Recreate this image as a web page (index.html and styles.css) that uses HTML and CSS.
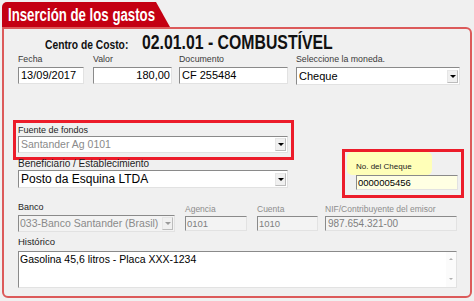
FILE: index.html
```html
<!DOCTYPE html>
<html lang="es">
<head>
<meta charset="utf-8">
<title>Inserción de los gastos</title>
<link rel="stylesheet" href="styles.css">
</head>
<body>
<div class="tab"><span class="narrow tab-text">Inserción de los gastos</span></div>
<div class="panel">
  <div class="head">
    <span class="cc-label"><span class="narrow">Centro de Costo:</span></span>
    <span class="cc-value"><span class="narrow">02.01.01 - COMBUSTÍVEL</span></span>
  </div>

  <div class="row row1">
    <div class="field w-fecha">
      <div class="lbl">Fecha</div>
      <div class="inp">13/09/2017</div>
    </div>
    <div class="field w-valor">
      <div class="lbl">Valor</div>
      <div class="inp right">180,00</div>
    </div>
    <div class="field w-doc">
      <div class="lbl">Documento</div>
      <div class="inp">CF 255484</div>
    </div>
    <div class="field w-moneda">
      <div class="lbl">Seleccione la moneda.</div>
      <div class="sel tall">Cheque<span class="arrow"></span></div>
    </div>
  </div>

  <div class="row row2">
    <div class="leftcol">
      <div class="hl hl-fuente">
        <div class="lbl lbl-dark small">Fuente de fondos</div>
        <div class="sel grey-text fuente">Santander Ag 0101<span class="arrow"></span></div>
      </div>
      <div class="field w-benef">
        <div class="lbl lbl-dark benef">Beneficiario / Establecimiento</div>
        <div class="sel tall big">Posto da Esquina LTDA<span class="arrow"></span></div>
      </div>
    </div>
    <div class="hl hl-cheque">
      <div class="yl"><div class="lbl cheque-lbl">No. del Cheque</div></div>
      <div class="inp yellow">0000005456</div>
    </div>
  </div>

  <div class="row row3">
    <div class="field w-banco">
      <div class="lbl lbl-dark small">Banco</div>
      <div class="sel dis banco">033-Banco Santander (Brasil)<span class="arrow off"></span></div>
    </div>
    <div class="field w-agencia pad">
      <div class="lbl off">Agencia</div>
      <div class="inp dis tiny">0101</div>
    </div>
    <div class="field w-cuenta pad">
      <div class="lbl off">Cuenta</div>
      <div class="inp dis tiny">1010</div>
    </div>
    <div class="field w-nif pad">
      <div class="lbl off">NIF/Contribuyente del emisor</div>
      <div class="inp dis nif">987.654.321-00</div>
    </div>
  </div>

  <div class="row row4">
    <div class="field w-hist">
      <div class="lbl lbl-dark hist">Histórico</div>
      <div class="textarea">
        <div class="ta-text">Gasolina 45,6 litros - Placa XXX-1234</div>
        <div class="scroll"><span class="up"></span><span class="down"></span></div>
      </div>
    </div>
  </div>
</div>
</body>
</html>
```

FILE: styles.css
```css
html, body {
  margin: 0;
  padding: 0;
}
body {
  background: #f0f0f0;
  font-family: "Liberation Sans", Arial, sans-serif;
  color: #000;
  width: 474px;
  height: 301px;
  overflow: hidden;
}

/* Arial-Narrow-like bold text: Liberation Sans Bold squeezed horizontally */
.narrow {
  display: inline-block;
  font-family: "Liberation Sans", Arial, sans-serif;
  font-weight: bold;
  white-space: nowrap;
  transform-origin: 0 50%;
}

.tab {
  margin: 2px 0 0 2px;
  width: 168px;
  height: 25px;
  box-sizing: border-box;
  padding: 1px 0 0 6px;
  background: #c40012;
  color: #fff;
  font-size: 18px;
  line-height: 24px;
  border-top-left-radius: 5px;
  clip-path: polygon(0 0, 154px 0, 100% 100%, 0 100%);
  white-space: nowrap;
  overflow: hidden;
}
.tab-text { transform: scaleX(0.735); }

.panel {
  margin-left: 2px;
  width: 470px;
  box-sizing: border-box;
  border: 2px solid #dc5a5a;
  border-radius: 0 6px 6px 6px;
  padding: 0 0 8px 14px;
}

.head {
  display: flex;
  align-items: baseline;
  height: 20px;
  margin-top: 3px;
  padding-left: 27px;
  gap: 14px;
  line-height: 20px;
  white-space: nowrap;
  color: #111;
}
.cc-label { width: 83px; font-size: 13px; }
.cc-label .narrow { transform: scaleX(0.79); }
.cc-value { width: 191px; font-size: 21px; }
.cc-value .narrow { transform: scaleX(0.753); }

.row { display: flex; }
.row1 { margin-top: 1px; gap: 9px; }
.row1 .w-valor { margin-right: -2px; }
.row1 .w-doc { margin-right: -1px; }

.field { display: flex; flex-direction: column; }
.w-fecha { width: 66px; }
.w-valor { width: 79px; }
.w-doc { width: 109px; }
.w-moneda { width: 164px; }

.lbl {
  font-size: 8.8px;
  line-height: 12px;
  height: 12px;
  color: #3a3a3a;
  white-space: nowrap;
}
.lbl-dark { color: #1e1e1e; }
.lbl.small { font-size: 9px; }
.lbl.benef { font-size: 10px; }
.lbl.hist { font-size: 9.5px; }
.lbl.off { color: #8d8d8d; font-size: 8.5px; }
.lbl.cheque-lbl { font-size: 8px; color: #222; }

.inp, .sel {
  box-sizing: border-box;
  height: 17px;
  margin-top: 2px;
  background: #fff;
  border-top: 1px solid #8a8a8a;
  border-left: 1px solid #8a8a8a;
  border-right: 1px solid #e2e2e2;
  border-bottom: 1px solid #e2e2e2;
  font-size: 11px;
  line-height: 15px;
  padding: 0 2px;
  white-space: nowrap;
  overflow: hidden;
}
.inp.right { text-align: right; padding-right: 1px; }

.sel {
  display: flex;
  align-items: center;
  justify-content: space-between;
  padding: 0 1px 0 2px;
}
.sel.tall { height: 18px; }
.sel.big { font-size: 12px; }
.sel.fuente { font-size: 10.5px; }
.sel.banco { font-size: 10.5px; padding-left: 1px; }
.grey-text { color: #8a8a8a; }

.arrow {
  flex: none;
  position: relative;
  width: 11px;
  height: 13px;
  box-sizing: border-box;
  background: #f0f0f0;
  border: 1px solid #bcbcbc;
  border-left-color: #e6e6e6;
  border-top-color: #e6e6e6;
}
.arrow::after {
  content: "";
  position: absolute;
  left: 2px;
  top: 4px;
  border-left: 3px solid transparent;
  border-right: 3px solid transparent;
  border-top: 3px solid #000;
}
.arrow.off::after { border-top-color: #9a9a9a; }

.row2 { margin-top: 35px; gap: 48px; }
.leftcol { display: flex; flex-direction: column; }

.hl {
  border: 3px solid #ec1c2a;
  box-sizing: border-box;
}
.hl-fuente {
  margin-left: -5px;
  width: 281px;
  padding: 1px 3px 4px 2px;
}
.hl-fuente .sel { margin-top: 0; }

.w-benef { width: 270px; }
.w-benef .benef { margin-top: -2px; }
.w-benef .sel { margin-top: 0; }

.hl-cheque {
  margin-top: 29px;
  width: 122px;
  height: 49px;
  padding: 0 3px 0 2px;
}
.yl {
  width: 85px;
  height: 23px;
  box-sizing: border-box;
  padding: 9px 0 0 9px;
  background: #ffffb8;
  border-radius: 5px;
}
.inp.yellow {
  margin: 0 0 0 9px;
  width: 102px;
  height: 15px;
  line-height: 13px;
  font-size: 9.5px;
  background: #ffffe3;
  padding-left: 1px;
}

.row3 { margin-top: 3px; }
.w-banco { width: 157px; margin-right: 10px; }
.w-agencia { width: 62px; margin-right: 10px; }
.w-cuenta { width: 61px; margin-right: 7px; }
.w-nif { width: 132px; }
.pad { padding-top: 2px; }
.sel.dis { background: #f3f3f3; color: #8a8a8a; }
.inp.dis {
  background: #f3f3f3;
  color: #808080;
  height: 15px;
  line-height: 13px;
  margin-top: 1px;
}
.inp.tiny { font-size: 9.5px; padding-left: 1px; }
.inp.nif { font-size: 10px; padding-left: 2px; }

.row4 { margin-top: 4px; }
.w-hist { width: 439px; }
.textarea {
  display: flex;
  box-sizing: border-box;
  height: 37px;
  margin-top: 3px;
  background: #fff;
  border-top: 1px solid #8a8a8a;
  border-left: 1px solid #8a8a8a;
  border-right: 1px solid #e2e2e2;
  border-bottom: 1px solid #e2e2e2;
}
.ta-text {
  flex: 1;
  font-size: 10.5px;
  line-height: 13px;
  padding: 1px 1px 0 1px;
  white-space: nowrap;
}
.scroll {
  width: 10px;
  display: flex;
  flex-direction: column;
  justify-content: space-between;
  align-items: center;
  padding: 6px 0 7px;
  box-sizing: border-box;
  background: #fbfbfb;
}
.up {
  border-left: 2px solid transparent;
  border-right: 2px solid transparent;
  border-bottom: 2px solid #b0b0b0;
}
.down {
  border-left: 2px solid transparent;
  border-right: 2px solid transparent;
  border-top: 2px solid #b0b0b0;
}
```
